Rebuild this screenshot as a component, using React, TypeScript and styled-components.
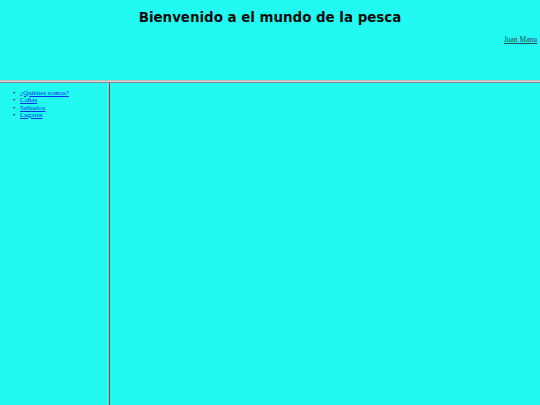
import React from "react";
import styled, { createGlobalStyle } from "styled-components";

const Global = createGlobalStyle`
  html, body { margin: 0; padding: 0; height: 100%; }
  body { background: #22f9f1; overflow: hidden; }
  #root { height: 100%; }
`;

const Page = styled.div`
  display: grid;
  grid-template-rows: 80px 3px 1fr;
  height: 100vh;
  background: #22f9f1;
`;

const TopFrame = styled.header`
  display: flex;
  flex-direction: column;
  padding: 9px 3px 0 3px;
`;

const Title = styled.h1`
  margin: 0;
  text-align: center;
  font-family: "DejaVu Sans", Verdana, sans-serif;
  font-weight: bold;
  font-size: 13.4px;
  line-height: 17px;
  color: #0a0a0a;
`;

const UserLink = styled.a`
  align-self: flex-end;
  margin-top: 9px;
  font-family: "Liberation Serif", "Times New Roman", serif;
  font-size: 7.5px;
  line-height: 9px;
  color: #1b4d55;
  text-decoration: underline;
`;

const HDivider = styled.div`
  border-top: 1px solid #bdbdbd;
  border-bottom: 1px solid #7d8a8a;
  background: #d6d6d6;
`;

const Bottom = styled.div`
  display: grid;
  grid-template-columns: 107px 3px 1fr;
  min-height: 0;
`;

const SideFrame = styled.nav`
  padding: 6.5px 0 0 0;
`;

const Menu = styled.ul`
  margin: 0;
  padding: 0 0 0 13px;
  list-style: none;
  font-family: "Liberation Serif", "Times New Roman", serif;
  font-size: 7px;
  line-height: 7.5px;
`;

const MenuItem = styled.li`
  display: flex;
  &::before {
    content: "•";
    width: 7px;
    color: #1a1a1a;
    font-size: 7px;
  }
`;

const MenuLink = styled.a`
  color: #0a2ff0;
  text-decoration: underline;
`;

const VDivider = styled.div`
  border-left: 1px solid #d2c8c8;
  border-right: 1px solid #4e5f66;
  background: #a9b3b3;
`;

const MainFrame = styled.main``;

export default function App() {
  const items = ["¿Quiénes somos?", "Cañas", "Señuelos", "Lugares"];
  return (
    <>
      <Global />
      <Page>
        <TopFrame>
          <Title>Bienvenido a el mundo de la pesca</Title>
          <UserLink href="#">Juan Manu</UserLink>
        </TopFrame>
        <HDivider />
        <Bottom>
          <SideFrame>
            <Menu>
              {items.map((t) => (
                <MenuItem key={t}>
                  <MenuLink href="#">{t}</MenuLink>
                </MenuItem>
              ))}
            </Menu>
          </SideFrame>
          <VDivider />
          <MainFrame />
        </Bottom>
      </Page>
    </>
  );
}
